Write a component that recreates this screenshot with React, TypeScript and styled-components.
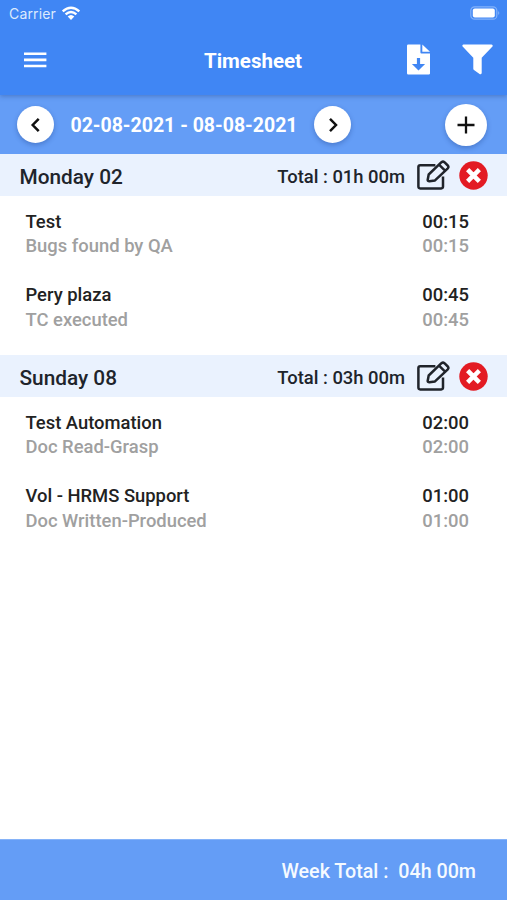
import React from "react";
import styled, { createGlobalStyle } from "styled-components";

const GlobalStyle = createGlobalStyle`
  * { box-sizing: border-box; }
  body { margin: 0; background: #fff; font-family: Roboto, "Liberation Sans", sans-serif; }
`;

const Screen = styled.div`
  display: flex;
  flex-direction: column;
  width: 507px;
  height: 900px;
  overflow: hidden;
  background: #fff;
`;

const Header = styled.header`
  height: 95px;
  flex: none;
  background: #4086f4;
  box-shadow: 0 1px 5px rgba(30, 60, 120, 0.4);
  z-index: 1;
`;

const StatusBar = styled.div`
  display: flex;
  align-items: center;
  height: 26px;
  padding: 0 7px 0 9px;
  color: #dceafd;
  font-family: Inter, Roboto, sans-serif;
  font-size: 14px;
  letter-spacing: 0.15px;
  svg { margin-left: 5px; }
  svg:last-child { margin-left: auto; }
`;

const TitleBar = styled.div`
  display: grid;
  grid-template-columns: 1fr auto 1fr;
  align-items: center;
  height: 67px;
  padding: 0 14px 0 24px;
`;

const Title = styled.h1`
  margin: 3px 11px 0 0;
  color: #fff;
  font-size: 20.5px;
  font-weight: 700;
  line-height: 24px;
`;

const Actions = styled.div`
  display: flex;
  justify-content: flex-end;
  gap: 32px;
`;

const IconButton = styled.button`
  display: flex;
  padding: 0;
  border: 0;
  background: none;
  justify-self: start;
`;

const WeekBar = styled.section`
  display: flex;
  align-items: center;
  flex: none;
  height: 59px;
  padding: 0 20px 0 17px;
  background: #649df6;
`;

const RoundButton = styled.button<{ $size: number }>`
  display: flex;
  align-items: center;
  justify-content: center;
  width: ${(p) => p.$size}px;
  height: ${(p) => p.$size}px;
  padding: 0;
  border: 0;
  border-radius: 50%;
  background: #fff;
  box-shadow: 0 2px 5px rgba(20, 50, 120, 0.32);
  &:last-child { margin-left: auto; }
`;

const WeekRange = styled.div`
  width: 260px;
  text-align: center;
  color: #fff;
  font-size: 19.5px;
  font-weight: 700;
  padding-top: 2px;
`;

const Days = styled.main`
  flex: 1;
`;

const DayHeader = styled.div`
  display: flex;
  align-items: center;
  height: 42px;
  padding: 0 19px 0 19.5px;
  background: #eaf2fe;
  color: #20242b;
`;

const DayName = styled.h2`
  flex: 1;
  margin: 4px 0 0;
  font-size: 20.8px;
  font-weight: 500;
`;

const DayTotal = styled.span`
  margin: 3px 12px 0 0;
  font-size: 18.4px;
  font-weight: 500;
`;

const DeleteButton = styled(IconButton)`
  margin-left: 9px;
`;

const TaskList = styled.ul`
  height: 159px;
  margin: 0;
  padding: 14px 38px 0 25.5px;
  list-style: none;
`;

const Task = styled.li`
  height: 73.3px;
`;

const TaskLine = styled.div<{ $muted?: boolean }>`
  display: flex;
  justify-content: space-between;
  color: ${(p) => (p.$muted ? "#a0a0a0" : "#222")};
  font-size: 18.4px;
  font-weight: 500;
  line-height: 24.4px;
`;

const Footer = styled.footer`
  display: flex;
  align-items: center;
  justify-content: flex-end;
  flex: none;
  height: 61px;
  padding: 2px 31px 0 0;
  border-top: 1px solid #86b3f8;
  background: #649df6;
  color: #f5faff;
  font-size: 19.7px;
  font-weight: 500;
  white-space: pre;
`;

const WifiIcon = () => (
  <svg width="20" height="15" viewBox="0 0 20 15" fill="none" stroke="#fff" strokeWidth="2.4">
    <path d="M1.7 5.3Q10-2 18.3 5.3M4.6 8.4Q10 3.5 15.4 8.4" />
    <path d="M6.7 10.5Q10 7.4 13.3 10.5L10 14Z" fill="#fff" stroke="none" />
  </svg>
);

const BatteryIcon = () => (
  <svg width="30" height="14" viewBox="0 0 30 14">
    <rect x="0.8" y="0.8" width="26" height="12.4" rx="3.8" fill="none" stroke="#83b2fa" strokeWidth="1.2" />
    <rect x="2.8" y="2.6" width="22" height="8.8" rx="2" fill="#fff" />
    <path d="M28.2 5Q30.4 7 28.2 9Z" fill="#83b2fa" />
  </svg>
);

const MenuIcon = () => (
  <svg width="23" height="16" viewBox="0 0 23 16" fill="#fff">
    <path d="M0 .5h22.4v2.6H0zM0 6.6h22.4v2.6H0zM0 12.7h22.4v2.6H0z" />
  </svg>
);

const DownloadIcon = () => (
  <svg width="23" height="31" viewBox="0 0 23 31">
    <path d="M1.2.5h12.2v8q0 1 1 1H23v19.9a1.2 1.2 0 0 1-1.2 1.1H1.2A1.2 1.2 0 0 1 0 29.3V1.7A1.2 1.2 0 0 1 1.2.5Z" fill="#fff" />
    <path d="M15.3.5 23 7.8H15.3Z" fill="#fff" />
    <path d="M9.9 14h3.2v6h5L11.5 26.6 4.9 20h5Z" fill="#4086f4" />
  </svg>
);

const FilterIcon = () => (
  <svg width="31" height="31" viewBox="0 0 31 31" fill="#fff">
    <path d="M1.4.5h28.1q1.5.2 1.2 1.7L19.7 13.8V29q-.3 1.6-1.8 1.2L12 26.1q-.7-.6-.7-1.4V13.8L.4 2.2Q0 .8 1.4.5Z" />
  </svg>
);

const ChevronIcon = ({ forward = false }: { forward?: boolean }) => (
  <svg width="14" height="18" viewBox="0 0 14 18" fill="none" stroke="#111" strokeWidth="2.5">
    <path d={forward ? "M4 2.8l6 6.2-6 6.2" : "M9.7 2.8L3.7 9l6 6.2"} />
  </svg>
);

const PlusIcon = () => (
  <svg width="18" height="18" viewBox="0 0 18 18" fill="none" stroke="#111" strokeWidth="2.3">
    <path d="M9 .5v17M.5 9h17" />
  </svg>
);

const EditIcon = () => (
  <svg width="33" height="30" viewBox="0 0 33 30" fill="none" stroke="#20242b" strokeWidth="2.5" strokeLinejoin="round">
    <path d="M18.4 5.2H3.2Q1.4 5.2 1.4 7v19.6q0 1.8 1.8 1.8h21q1.8 0 1.8-1.8V16.5" />
    <path d="M10.7 19.7l1-5.2L24.5 2.2q1.5-1.2 2.9 0l3.4 3.3q1.2 1.4 0 2.8L18 20.4l-5.7.9q-1.7 0-1.6-1.6ZM22 4.7l6.1 6" />
  </svg>
);

const DeleteIcon = () => (
  <svg width="29" height="29" viewBox="0 0 29 29">
    <circle cx="14.5" cy="14.5" r="14.2" fill="#e31b23" />
    <path d="M10.2 10.2l8.6 8.6M18.8 10.2l-8.6 8.6" stroke="#fff" strokeWidth="4.5" strokeLinecap="square" />
  </svg>
);

const days = [
  {
    name: "Monday 02",
    total: "01h 00m",
    tasks: [
      { project: "Test", activity: "Bugs found by QA", time: "00:15" },
      { project: "Pery plaza", activity: "TC executed", time: "00:45" },
    ],
  },
  {
    name: "Sunday 08",
    total: "03h 00m",
    tasks: [
      { project: "Test Automation", activity: "Doc Read-Grasp", time: "02:00" },
      { project: "Vol - HRMS Support", activity: "Doc Written-Produced", time: "01:00" },
    ],
  },
];

export default function App() {
  return (
    <Screen>
      <GlobalStyle />
      <Header>
        <StatusBar>
          <span>Carrier</span>
          <WifiIcon />
          <BatteryIcon />
        </StatusBar>
        <TitleBar>
          <IconButton aria-label="Menu"><MenuIcon /></IconButton>
          <Title>Timesheet</Title>
          <Actions>
            <IconButton aria-label="Download"><DownloadIcon /></IconButton>
            <IconButton aria-label="Filter"><FilterIcon /></IconButton>
          </Actions>
        </TitleBar>
      </Header>
      <WeekBar>
        <RoundButton $size={37} aria-label="Previous week"><ChevronIcon /></RoundButton>
        <WeekRange>02-08-2021 - 08-08-2021</WeekRange>
        <RoundButton $size={37} aria-label="Next week"><ChevronIcon forward /></RoundButton>
        <RoundButton $size={42} aria-label="Add entry"><PlusIcon /></RoundButton>
      </WeekBar>
      <Days>
        {days.map((day) => (
          <section key={day.name}>
            <DayHeader>
              <DayName>{day.name}</DayName>
              <DayTotal>Total : {day.total}</DayTotal>
              <IconButton aria-label="Edit day"><EditIcon /></IconButton>
              <DeleteButton aria-label="Delete day"><DeleteIcon /></DeleteButton>
            </DayHeader>
            <TaskList>
              {day.tasks.map((task) => (
                <Task key={task.project}>
                  <TaskLine><span>{task.project}</span><span>{task.time}</span></TaskLine>
                  <TaskLine $muted><span>{task.activity}</span><span>{task.time}</span></TaskLine>
                </Task>
              ))}
            </TaskList>
          </section>
        ))}
      </Days>
      <Footer>{"Week Total :  04h 00m"}</Footer>
    </Screen>
  );
}
